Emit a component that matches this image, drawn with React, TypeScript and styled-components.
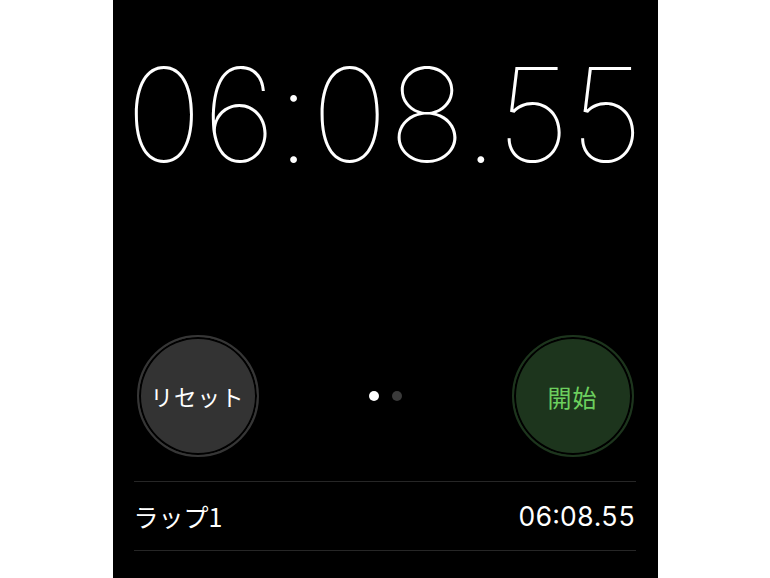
import React from 'react';
import styled, { createGlobalStyle } from 'styled-components';

const GlobalStyle = createGlobalStyle`
  html, body {
    margin: 0;
    padding: 0;
    background: #ffffff;
  }
  body {
    font-family: Inter, "Noto Sans CJK JP", sans-serif;
  }
`;

const Screen = styled.div`
  width: 545px;
  height: 578px;
  margin: 0 auto;
  background: #000;
  box-sizing: border-box;
  padding: 0 22px 0 21px;
  display: flex;
  flex-direction: column;
  overflow: hidden;
`;

const BigTime = styled.div`
  margin-top: 42px;
  height: 146px;
  display: flex;
  justify-content: center;
  color: #fff;
  font-family: Inter, "Liberation Sans", sans-serif;
  font-weight: 120;
  font-size: 130px;
  line-height: 146px;
  letter-spacing: 0.2px;
  white-space: nowrap;
`;

const Controls = styled.div`
  margin-top: 147px;
  display: flex;
  align-items: center;
  justify-content: space-between;
  padding: 0 2px 0 3px;
`;

const RoundButton = styled.button<{ variant: 'reset' | 'start' }>`
  width: 122px;
  height: 122px;
  border-radius: 50%;
  border: 2px solid ${p => (p.variant === 'start' ? '#1d351d' : '#363636')};
  background: ${p => (p.variant === 'start' ? '#1d351d' : '#333333')};
  box-shadow: inset 0 0 0 2px #000;
  color: ${p => (p.variant === 'start' ? '#6ccf5e' : '#ffffff')};
  font-family: "Noto Sans CJK JP", sans-serif;
  font-size: ${p => (p.variant === 'start' ? '24px' : '22.5px')};
  letter-spacing: 1px;
  display: flex;
  align-items: center;
  justify-content: center;
  padding: 0;
  cursor: pointer;
`;

const Dots = styled.div`
  display: flex;
  gap: 13px;
  align-items: center;
`;

const Dot = styled.span<{ active?: boolean }>`
  width: 10px;
  height: 10px;
  border-radius: 50%;
  background: ${p => (p.active ? '#ffffff' : '#3a3a3a')};
`;

const LapList = styled.div`
  margin-top: 24px;
  border-top: 1px solid #262626;
`;

const LapRow = styled.div`
  height: 68px;
  border-bottom: 1px solid #262626;
  display: flex;
  align-items: center;
  justify-content: space-between;
  color: #fff;
`;

const LapLabel = styled.span`
  font-family: "Noto Sans CJK JP", sans-serif;
  font-size: 25px;
`;

const LapTime = styled.span`
  font-family: Inter, "Liberation Sans", sans-serif;
  font-size: 26.5px;
  font-variant-numeric: tabular-nums;
`;

export default function App() {
  return (
    <>
      <GlobalStyle />
      <Screen>
        <BigTime>06:08.55</BigTime>
        <Controls>
          <RoundButton variant="reset">リセット</RoundButton>
          <Dots>
            <Dot active />
            <Dot />
          </Dots>
          <RoundButton variant="start">開始</RoundButton>
        </Controls>
        <LapList>
          <LapRow>
            <LapLabel>ラップ1</LapLabel>
            <LapTime>06:08.55</LapTime>
          </LapRow>
        </LapList>
      </Screen>
    </>
  );
}
